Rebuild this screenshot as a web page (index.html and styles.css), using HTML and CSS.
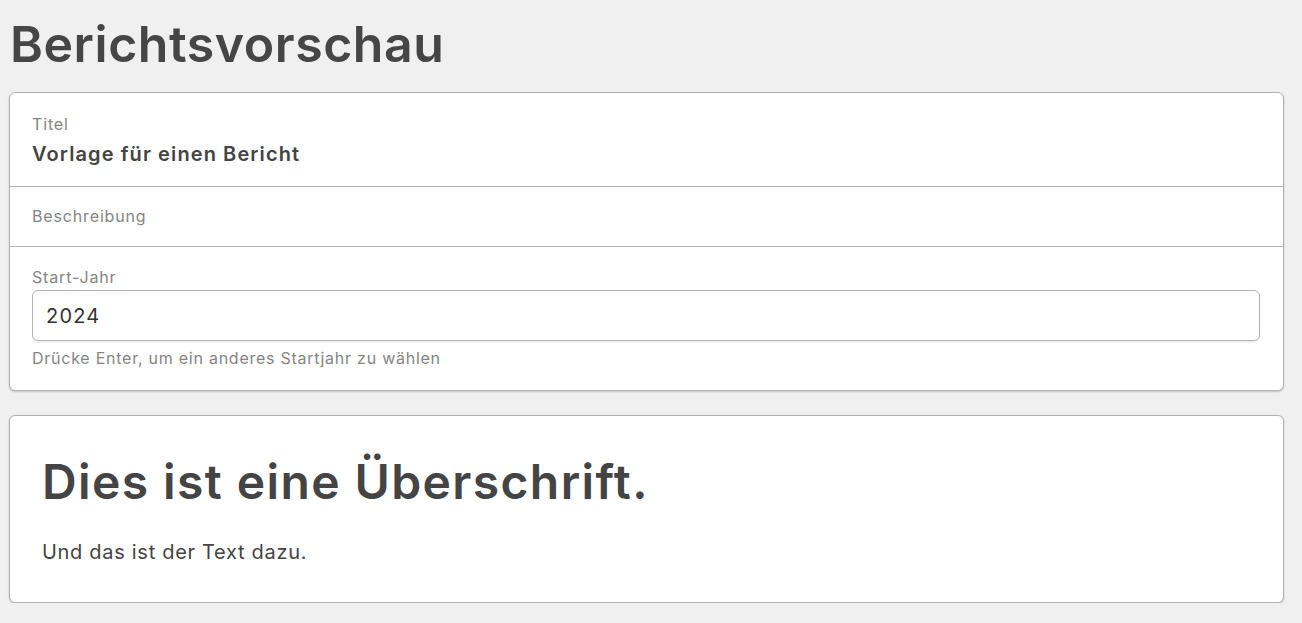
FILE: index.html
```html
<!DOCTYPE html>
<html lang="de">
<head>
<meta charset="utf-8">
<title>Berichtsvorschau</title>
<link rel="stylesheet" href="styles.css">
</head>
<body>
<main class="page">
  <h1 class="page-title">Berichtsvorschau</h1>
  <section class="card form-card">
    <div class="field">
      <div class="field-label">Titel</div>
      <div class="field-value">Vorlage für einen Bericht</div>
    </div>
    <div class="field field-compact">
      <div class="field-label">Beschreibung</div>
    </div>
    <div class="field field-last">
      <label class="field-label" for="year">Start-Jahr</label>
      <input class="text-input" id="year" type="text" value="2024">
      <div class="field-hint">Drücke Enter, um ein anderes Startjahr zu wählen</div>
    </div>
  </section>
  <section class="card preview-card">
    <h2 class="preview-heading">Dies ist eine Überschrift.</h2>
    <p class="preview-text">Und das ist der Text dazu.</p>
  </section>
</main>
</body>
</html>
```
FILE: styles.css
```css
html, body {
  margin: 0;
  padding: 0;
  background: #f0f0f0;
}
body {
  font-family: Inter, "Noto Sans", sans-serif;
  color: #444444;
}
.page {
  padding: 0 18px 0 9px;
  display: flex;
  flex-direction: column;
}
.page-title {
  margin: 14px 0 18px 1px;
  font-size: 50px;
  font-weight: 600;
  line-height: 60px;
  color: #464646;
  letter-spacing: 0.55px;
}
.card {
  background: #ffffff;
  border: 1px solid #b2b2b2;
  border-radius: 6px;
  box-shadow: 0 1px 2px rgba(0,0,0,0.2);
}
.form-card {
  display: flex;
  flex-direction: column;
}
.field {
  display: flex;
  flex-direction: column;
  padding: 20px 22px 19px;
  border-bottom: 1px solid #b2b2b2;
}
.field-compact {
  padding: 18px 22px 19px;
}
.field-last {
  border-bottom: none;
  padding: 19px 23px 21px 22px;
}
.field-label {
  font-size: 16px;
  line-height: 22px;
  color: #858585;
  letter-spacing: 0.85px;
}
.field-value {
  margin-top: 6px;
  font-size: 20px;
  line-height: 26px;
  font-weight: 600;
  color: #444444;
  letter-spacing: 1.1px;
}
.text-input {
  margin-top: 2px;
  height: 51px;
  box-sizing: border-box;
  padding: 0 13px;
  border: 1px solid #b2b2b2;
  border-radius: 6px;
  font-family: inherit;
  font-size: 20px;
  letter-spacing: 1.2px;
  color: #333333;
  background: #ffffff;
  box-shadow: 0 2px 1px rgba(0,0,0,0.06);
  outline: none;
}
.field-hint {
  margin-top: 6px;
  font-size: 16px;
  line-height: 22px;
  color: #858585;
  letter-spacing: 0.75px;
}
.preview-card {
  margin-top: 24px;
  padding: 35px 32px 36px;
}
.preview-heading {
  margin: 0;
  font-size: 48px;
  line-height: 62px;
  font-weight: 600;
  color: #444444;
  letter-spacing: 1.4px;
}
.preview-text {
  margin: 25px 0 0;
  font-size: 20px;
  line-height: 28px;
  color: #444444;
  letter-spacing: 0.7px;
}
```
